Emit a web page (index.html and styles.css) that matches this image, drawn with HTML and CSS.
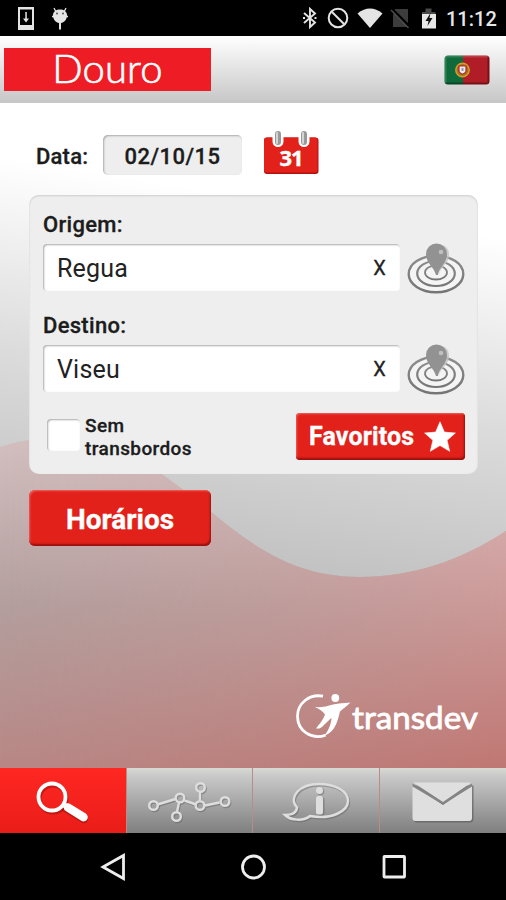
FILE: index.html
```html
<!DOCTYPE html>
<html lang="pt">
<head>
    <meta charset="UTF-8">
    <meta name="viewport" content="width=device-width, initial-scale=1.0">
    <title>Transdev Douro</title>
    <link rel="stylesheet" href="styles.css">
</head>
<body>
    <!-- Status bar -->
    <div class="status-bar">
        <svg class="status-left" width="60" height="36" viewBox="0 0 60 36">
            <path fill="#e4e4e4" fill-rule="evenodd" d="M18 7h16v23H18zM20 9.500v15.500h12V9.500z"/>
            <path fill="#e4e4e4" d="M25.300 12h1.500v6.500h2.200L26 22.500l-3-4h2.300z"/>
        </svg>
        <svg class="status-debug" width="24" height="36" viewBox="0 0 24 36">
            <path d="M4 8l2 4M16 8l-2 4M2 16.500h3M15 16.500h3" stroke="#e4e4e4" stroke-width="1.300"/>
            <path fill="#e4e4e4" d="M3 15c0-7.500 14-7.500 14 0 0 5-3 7.500-6 8V29.500H9V23C6 22.500 3 20 3 15z"/>
            <circle cx="7" cy="13.500" r="1" fill="#555"/>
            <circle cx="13" cy="13.500" r="1" fill="#555"/>
        </svg>
        <svg class="status-right" width="140" height="36" viewBox="300 0 140 36">
            <path d="M304 13l11 9.500-5 4.500V9l5 4.500L304 23" fill="none" stroke="#e4e4e4" stroke-width="1.900"/>
            <path d="M303 18h2M314.500 18h2" stroke="#e4e4e4" stroke-width="2"/>
            <circle cx="338" cy="18" r="9.300" fill="none" stroke="#e4e4e4" stroke-width="2"/>
            <path d="M332 12l12 12" stroke="#e4e4e4" stroke-width="2"/>
            <path d="M357.500 13.500q12.500-10 25 0L370 28z" fill="#e4e4e4"/>
            <path d="M395 9h13v18h-15V15z" fill="#3c3c3c"/>
            <path d="M392.500 9.500l18 18" stroke="#000" stroke-width="2.500"/>
            <path d="M391 10l17.500 18" stroke="#4c4c4c" stroke-width="1.500"/>
            <path d="M422 12h3.500V8.500h6V12h4v4h-13.500z" fill="#494949"/>
            <path d="M422 14h14v14.500h-14z" fill="#e8e8e8"/>
            <path d="M430.500 13l-5 8h3l-1 5 5-8h-3z" fill="#111"/>
        </svg>
        <span class="clock">11:12</span>
    </div>

    <!-- Header -->
    <header class="header">
        <div class="brand">Douro</div>
        <svg class="flag" width="46" height="30" viewBox="0 0 46 30">
            <defs>
                <clipPath id="flagShape"><rect x=".5" y=".5" width="45" height="29" rx="3.500"/></clipPath>
            </defs>
            <g clip-path="url(#flagShape)">
                <path d="M0 0h19v30H0z" fill="#0e6a3a"/>
                <path d="M19 0h27v30H19z" fill="#b01d27"/>
                <path d="M1.500 30V1.500H46" fill="none" stroke="#fff" stroke-opacity=".15" stroke-width="2"/>
                <path d="M44.500 0v28.500H0" fill="none" stroke="#000" stroke-opacity=".35" stroke-width="2"/>
            </g>
            <circle cx="18.500" cy="15" r="6.700" fill="#a8701c" stroke="#cda02c" stroke-width="1.500"/>
            <path d="M15 11h7v5.500q-3.500 5-7 0z" fill="#eee" stroke="#b81e28" stroke-width="1.200"/>
            <path d="M17.500 13h2v3h-2z" fill="#8795b5"/>
        </svg>
    </header>

    <main class="content">
        <!-- Background curves -->
        <svg class="backdrop" width="506" height="665" viewBox="0 103 506 665">
            <defs>
                <linearGradient id="greyFade" gradientUnits="userSpaceOnUse" x1="270" y1="200" x2="210" y2="570">
                    <stop offset="0" stop-color="#fff"/>
                    <stop offset=".5" stop-color="#dcdcdc"/>
                    <stop offset="1" stop-color="#bfc0bf"/>
                </linearGradient>
                <linearGradient id="redFade" gradientUnits="userSpaceOnUse" x1="0" y1="440" x2="0" y2="768">
                    <stop offset="0" stop-color="#d3bfc0"/>
                    <stop offset=".5" stop-color="#b39f9e"/>
                    <stop offset="1" stop-color="#b88785"/>
                </linearGradient>
                <linearGradient id="redSide" gradientUnits="userSpaceOnUse" x1="506" y1="510" x2="506" y2="768">
                    <stop offset="0" stop-color="#d6acac"/>
                    <stop offset=".45" stop-color="#c99593"/>
                    <stop offset="1" stop-color="#c07773"/>
                </linearGradient>
                <linearGradient id="sideMask">
                    <stop offset="0" stop-color="#000"/>
                    <stop offset=".5" stop-color="#666"/>
                    <stop offset="1" stop-color="#fff"/>
                </linearGradient>
                <mask id="fromRight"><path d="M0 103h506v665H0z" fill="url(#sideMask)"/></mask>
            </defs>
            <path d="M0 103h506v665H0z" fill="url(#greyFade)"/>
            <path d="M0 447C55 428 115 442 163 475C225 517 268 577 360 577C412 577 460 561 506 531V768H0z" fill="url(#redFade)"/>
            <path d="M0 447C55 428 115 442 163 475C225 517 268 577 360 577C412 577 460 561 506 531V768H0z" fill="url(#redSide)" mask="url(#fromRight)"/>
        </svg>

        <div class="date-row">
            <span class="date-label">Data:</span>
            <div class="date-value">02/10/15</div>
            <svg class="calendar" width="56" height="45" viewBox="0 0 56 45">
                <rect x="1" y="6.500" width="54.500" height="36.500" rx="3" fill="#b3120e"/>
                <rect x="1" y="6.500" width="53.500" height="35" rx="3" fill="#e2211b"/>
                <path d="M9.500 6v4.500a5.500 5.500 0 0 0 11 0V6zM35.500 6v4.500a5.500 5.500 0 0 0 11 0V6z" fill="#fff"/>
                <rect x="12" y="0" width="6" height="14" rx="3" fill="#999"/>
                <rect x="13" y="1" width="2" height="12" rx="1" fill="#d5d5d5"/>
                <rect x="38" y="0" width="6" height="14" rx="3" fill="#999"/>
                <rect x="39" y="1" width="2" height="12" rx="1" fill="#d5d5d5"/>
                <text class="calendar-day" x="28" y="34.500" text-anchor="middle">31</text>
            </svg>
        </div>

        <!-- Search panel -->
        <section class="panel">
            <div class="label">Origem:</div>
            <div class="field-row">
                <div class="field"><span>Regua</span><span class="clear">X</span></div>
                <svg class="pin" width="58" height="52" viewBox="0 0 58 52">
                    <defs>
                        <linearGradient id="ring" x1="0" y1="0" x2="0" y2="1">
                            <stop offset="0" stop-color="#8d8d8d"/>
                            <stop offset="1" stop-color="#757575"/>
                        </linearGradient>
                    </defs>
                    <g id="pinShape">
                        <g fill="none" stroke="url(#ring)">
                            <ellipse cx="29" cy="31" rx="27.300" ry="18.300" stroke-width="2.400" fill="#f4f4f4"/>
                            <ellipse cx="29" cy="30.500" rx="18.800" ry="12.500" stroke-width="2.200"/>
                            <ellipse cx="29" cy="29.500" rx="11" ry="7" stroke-width="1.800"/>
                        </g>
                        <path d="M32 31c2-8 11-11 10-20 0-5-3-8-7-9z" fill="#c4c4c4" fill-opacity=".8"/>
                        <path d="M29 32c-2-8-10-12-10-21a10.500 10.500 0 0 1 21 0c0 9-8 13-9 21z" fill="#929292"/>
                        <circle cx="34" cy="9" r="2.300" fill="#c0c0c0"/>
                    </g>
                </svg>
            </div>
            <div class="label label-destination">Destino:</div>
            <div class="field-row">
                <div class="field"><span>Viseu</span><span class="clear">X</span></div>
                <svg class="pin" width="58" height="52" viewBox="0 0 58 52"><use href="#pinShape"/></svg>
            </div>
            <div class="options">
                <div class="checkbox"></div>
                <div class="option-label">Sem<br>transbordos</div>
                <div class="button favorites">
                    <span>Favoritos</span>
                    <svg width="32" height="32" viewBox="0 0 32 32">
                        <path d="M16 .8l4.400 10.300 11 .9-8.300 7.300 2.600 11L16 24.500l-9.700 5.800 2.600-11L.6 12l11-.9z" fill="#fff" stroke="#fff" stroke-width=".6"/>
                    </svg>
                </div>
            </div>
        </section>

        <div class="button schedules">Horários</div>

        <!-- Logo -->
        <svg class="logo" width="186" height="48" viewBox="294 691 186 48">
            <path d="M323 696.200c-14-2.500-25.500 7.300-25.500 20 0 15 14.500 23.800 28 19" fill="none" stroke="#fff" stroke-width="2.800"/>
            <circle cx="335.300" cy="698" r="3.900" fill="#fff"/>
            <path d="M315 707c6 .5 12-.5 18-2.500 6-1 11-1.500 17.500-2-4 4-8.500 7-10.500 9-2 8-4 20-16 24.500 5-6 7-12 7.500-18-4 3-8.500 9-12 10.500h-3.500c3-4 7.500-9 9-14-2-3-5-5-10-7.500z" fill="#fff"/>
            <text class="logo-text" x="352" y="729" textLength="126" lengthAdjust="spacingAndGlyphs">transdev</text>
        </svg>
    </main>

    <!-- Tabs -->
    <nav class="tabs">
        <div class="tab active">
            <svg width="126" height="65" viewBox="0 768 126 65">
                <g transform="translate(1 2)" fill="none" stroke="#8f0d0a" stroke-opacity=".5">
                    <circle cx="52" cy="797" r="13.500" stroke-width="4"/>
                    <path d="M65 806l18 11" stroke-width="8.500" stroke-linecap="round"/>
                </g>
                <circle cx="52" cy="797" r="13.500" fill="none" stroke="#fff" stroke-width="3.800"/>
                <path d="M62.500 804l5 3" stroke="#fff" stroke-width="5"/>
                <path d="M68 807.500l15.500 9.700" stroke="#fff" stroke-width="8.500" stroke-linecap="round"/>
            </svg>
        </div>
        <div class="tab">
            <svg width="125" height="65" viewBox="127 768 125 65">
                <defs>
                    <g id="network" fill="none" stroke-width="2.400">
                        <path d="M157.500 804.500l18-5.500M179 802.500l-2 9.500M184.500 800.500l11.500 4M200 792v8.500M205 805.500l14.500-3"/>
                        <circle cx="153.500" cy="805.500" r="4.300"/>
                        <circle cx="180" cy="798" r="4.300"/>
                        <circle cx="176.500" cy="816.500" r="4.300"/>
                        <circle cx="200.500" cy="787.500" r="4.300"/>
                        <circle cx="200" cy="805.500" r="4.300"/>
                        <circle cx="225" cy="801.500" r="4.300"/>
                    </g>
                </defs>
                <use href="#network" x="1" y="1.300" stroke="#5e5e5e" stroke-opacity=".45"/>
                <use href="#network" stroke="#dedede"/>
            </svg>
        </div>
        <div class="tab">
            <svg width="126" height="65" viewBox="253 768 126 65">
                <defs>
                    <path id="bubble" d="M297 807.500c-9-10 2-23.500 22-23.500 16 0 29 7 29 17s-16 19-38 15c-6 5-19 5-25-1 6 0 11.500-2 12-7.500z" fill="none" stroke-width="2.500"/>
                </defs>
                <use href="#bubble" x="1" y="1.300" stroke="#5e5e5e" stroke-opacity=".45"/>
                <use href="#bubble" stroke="#dedede"/>
                <g fill="#606060" fill-opacity=".45"><circle cx="320.500" cy="791.500" r="3.800"/><rect x="317" y="797" width="7.500" height="18.500" rx="2.500"/></g>
                <circle cx="319.500" cy="790.500" r="3.500" fill="#dedede"/>
                <rect x="316" y="796" width="7" height="18.500" rx="2.500" fill="#dedede"/>
            </svg>
        </div>
        <div class="tab">
            <svg width="126" height="65" viewBox="380 768 126 65">
                <path d="M414 785.500h59.500v33q0 4-4 4h-53q-2.500 0-2.500-2z" fill="#555" fill-opacity=".6"/>
                <path d="M412.500 785l30.500 20 29-20v33q0 3-3 3h-53.500q-3 0-3-3z" fill="#dfdfdf"/>
                <path d="M412.500 783.500L443 802l29-18.500v3L443 804.500l-30.500-18z" fill="#858585"/>
                <path d="M413 782.500h58.500L443 802z" fill="#dfdfdf"/>
            </svg>
        </div>
    </nav>

    <!-- System navigation -->
    <div class="system-nav">
        <svg width="506" height="67" viewBox="0 833 506 67" fill="none" stroke="#eee" stroke-width="2.800">
            <path d="M103 867l20.500-11.500v23z"/>
            <circle cx="253.500" cy="867" r="11"/>
            <rect x="384" y="856.500" width="20.500" height="20.500" rx=".5"/>
        </svg>
    </div>
</body>
</html>
```
FILE: styles.css
```css
body {
    width: 506px;
    height: 900px;
    margin: 0;
    display: flex;
    flex-direction: column;
    overflow: hidden;
    font-family: Roboto, sans-serif;
    color: #1c1c1c;
    background: #000;
}

svg {
    display: block;
    flex: none;
}

/* Status bar */
.status-bar {
    height: 36px;
    display: flex;
    align-items: center;
    background: #000;
}
.status-debug {
    margin-left: -10px;
}
.status-right {
    margin-left: auto;
}
.clock {
    width: 60px;
    margin: 1px 0 0 6px;
    color: #e6e6e6;
    font-size: 20px;
    font-weight: 500;
}

/* Header */
.header {
    height: 67px;
    box-sizing: border-box;
    padding: 0 16px 0 4px;
    display: flex;
    align-items: center;
    justify-content: space-between;
    background: linear-gradient(#fff, #e3e3e3 50%, #c6c6c6);
}
.brand {
    width: 207px;
    height: 43px;
    margin-bottom: 1px;
    background: #ee1c24;
    color: #fff;
    font-family: Lato, sans-serif;
    font-size: 40px;
    font-weight: 300;
    line-height: 41px;
    letter-spacing: 0.2px;
    text-align: center;
    -webkit-text-stroke: 0.7px #fff;
}

/* Content */
.content {
    position: relative;
    height: 665px;
    box-sizing: border-box;
    padding: 28px 28px 0 29px;
    overflow: hidden;
}
.backdrop {
    position: absolute;
    top: 0;
    left: 0;
}
.date-row,
.panel,
.schedules,
.logo {
    position: relative;
}
.date-row {
    height: 45px;
    padding-left: 7px;
    display: flex;
    align-items: center;
}
.date-label,
.date-value,
.label,
.option-label {
    -webkit-text-stroke: 0.3px #1c1c1c;
}
.date-label {
    width: 67px;
    margin-top: 5px;
    font-size: 22px;
    font-weight: 500;
    letter-spacing: 0.2px;
}
.date-value {
    width: 139px;
    height: 40px;
    margin: 3px 21px 0 0;
    box-sizing: border-box;
    border-radius: 5px;
    background: #eee;
    box-shadow: inset 1px 1px 2px #aaa;
    font-size: 22px;
    font-weight: 500;
    line-height: 43px;
    letter-spacing: 0.5px;
    text-align: center;
}
.calendar-day {
    fill: #fff;
    stroke: #fff;
    stroke-width: 0.4px;
    font-family: "Open Sans", sans-serif;
    font-size: 22px;
    font-weight: 700;
    letter-spacing: -1px;
}

/* Panel */
.panel {
    height: 279px;
    margin-top: 19px;
    box-sizing: border-box;
    padding: 16px 13px 0 14px;
    border-radius: 10px;
    background: #eee;
    box-shadow: inset 0 1px 2px #ccc;
}
.label {
    height: 32px;
    font-size: 22px;
    font-weight: 500;
    line-height: 28px;
    letter-spacing: 0.3px;
}
.label-destination {
    margin-top: 17px;
}
.field-row {
    height: 52px;
    display: flex;
}
.field {
    width: 358px;
    height: 47px;
    margin: 1px 7px 0 0;
    box-sizing: border-box;
    padding: 0 14px;
    display: flex;
    justify-content: space-between;
    border-radius: 4px;
    background: #fff;
    box-shadow: inset 1px 1px 2px #aaa;
    font-size: 25px;
    line-height: 50px;
    letter-spacing: 0.2px;
    color: #222;
}
.clear {
    font-size: 20px;
    line-height: 48px;
    -webkit-text-stroke: 0.3px #222;
}
.options {
    margin-top: 16px;
    display: flex;
    align-items: flex-start;
}
.checkbox {
    width: 33px;
    height: 32px;
    margin: 7px 5px 0 4px;
    border-radius: 4px;
    background: #fff;
    box-shadow: inset 1px 1px 2px #aaa;
}
.option-label {
    margin-top: 2px;
    font-size: 19px;
    font-weight: 500;
    line-height: 23px;
    letter-spacing: 0.4px;
}

/* Buttons */
.button {
    box-sizing: border-box;
    border-radius: 6px;
    background: #e2211b;
    box-shadow: inset -1px -2px 2px #98100d, inset 1px 1px 2px #f0655f;
    color: #fff;
    font-weight: 700;
    -webkit-text-stroke: 0.3px #fff;
}
.favorites {
    width: 169px;
    height: 47px;
    margin: 1px 0 0 auto;
    padding: 0 9px 0 13px;
    display: flex;
    align-items: center;
    justify-content: space-between;
    border-radius: 4px;
    font-size: 25px;
    letter-spacing: 0.15px;
}
.schedules {
    width: 182px;
    height: 56px;
    margin-top: 16px;
    font-size: 28px;
    line-height: 59px;
    text-align: center;
}

/* Logo */
.logo {
    margin: 145px -2px 0 auto;
}
.logo-text {
    fill: #fff;
    stroke: #fff;
    stroke-width: 0.8px;
    font-family: Lato, sans-serif;
    font-size: 31px;
}

/* Tabs */
.tabs {
    height: 65px;
    display: grid;
    grid-template-columns: 126px 125px 126px 126px;
    column-gap: 1px;
    background: #b98c88;
}
.tab {
    background: linear-gradient(#d9dad4, #c9c9c9 12%, #7f7f7f);
}
.tab.active {
    background: linear-gradient(#ff2722, #ea1d19);
}

/* System navigation */
.system-nav {
    height: 67px;
    background: #000;
}
```
